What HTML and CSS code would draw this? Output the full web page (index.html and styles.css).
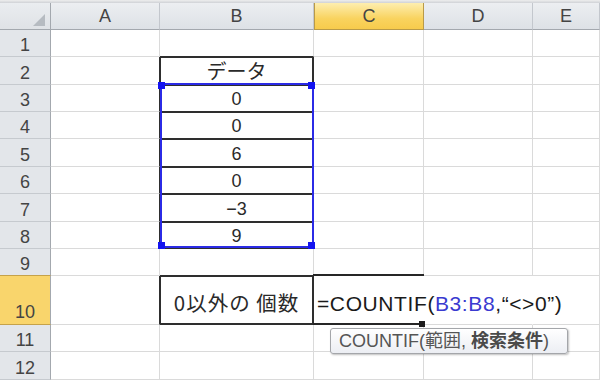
FILE: index.html
```html
<!DOCTYPE html>
<html lang="ja">
<head>
<meta charset="utf-8">
<link rel="stylesheet" href="styles.css">
</head>
<body>
<div class="wrap">
  <div class="topbar"></div>
  <div class="sheet">
    <div class="corner"><svg width="50" height="26" viewBox="0 0 50 26"><polygon points="45,11 45,23 33,23" fill="#b6bbc1"/></svg></div>
    <div class="ch">A</div><div class="ch">B</div><div class="ch sel">C</div><div class="ch">D</div><div class="ch">E</div>

    <div class="rh">1</div><div class="c"></div><div class="c bb"></div><div class="c"></div><div class="c"></div><div class="c"></div>
    <div class="rh">2</div><div class="c br"></div><div class="c tb"><span class="jp">データ</span></div><div class="c"></div><div class="c"></div><div class="c"></div>
    <div class="rh">3</div><div class="c br"></div><div class="c tb">0</div><div class="c"></div><div class="c"></div><div class="c"></div>
    <div class="rh">4</div><div class="c br"></div><div class="c tb">0</div><div class="c"></div><div class="c"></div><div class="c"></div>
    <div class="rh">5</div><div class="c br"></div><div class="c tb">6</div><div class="c"></div><div class="c"></div><div class="c"></div>
    <div class="rh">6</div><div class="c br"></div><div class="c tb">0</div><div class="c"></div><div class="c"></div><div class="c"></div>
    <div class="rh">7</div><div class="c br"></div><div class="c tb">−3</div><div class="c"></div><div class="c"></div><div class="c"></div>
    <div class="rh">8</div><div class="c br"></div><div class="c tb">9</div><div class="c"></div><div class="c"></div><div class="c"></div>
    <div class="rh">9</div><div class="c"></div><div class="c bb"></div><div class="c"></div><div class="c"></div><div class="c"></div>
    <div class="rh sel">10</div><div class="c br"></div><div class="c tb tb10"><span class="jp jp10">0以外の 個数</span></div><div class="c edit nr"><span class="f">=COUNTIF(<span class="ref">B3:B8</span>,“&lt;&gt;0”)</span></div><div class="c nr"></div><div class="c"></div>
    <div class="rh">11</div><div class="c"></div><div class="c"></div><div class="c"></div><div class="c"></div><div class="c"></div>
    <div class="rh">12</div><div class="c"></div><div class="c"></div><div class="c"></div><div class="c"></div><div class="c"></div>
  </div>

  <div class="selbox">
    <span class="hd tl"></span><span class="hd tr"></span><span class="hd bl"></span><span class="hd br2"></span>
  </div>
  <div class="editbox"><span class="fh"></span></div>
  <div class="tip">COUNTIF(範囲, <b>検索条件</b>)</div>
</div>
</body>
</html>
```

FILE: styles.css
```css
html, body {
  margin: 0;
  padding: 0;
  background: #ffffff;
  overflow: hidden;
}

.wrap {
  position: relative;
  width: 600px;
  height: 380px;
  font-family: "Liberation Sans", "Noto Sans CJK JP", sans-serif;
  color: #222;
}

.topbar {
  height: 3px;
  background: linear-gradient(#eeeeee, #cfd2d6);
}

.sheet {
  display: grid;
  grid-template-columns: 51px 109px 154px 110px 109px 67px;
  grid-template-rows: 27px 27px 28px 27px 27px 28px 27px 28px 27px 27px 49px 27px 28px;
  background: #fff;
}

.sheet > div {
  box-sizing: border-box;
}

.corner {
  background: linear-gradient(#eaedf0, #dfe2e6);
  border-right: 1px solid #a3a8ae;
  border-bottom: 1px solid #a3a8ae;
}
.corner svg { display: block; }

.ch {
  background: linear-gradient(#eceef1, #dde1e6);
  border-right: 1px solid #c3c7cd;
  border-bottom: 1px solid #a3a8ae;
  display: flex;
  align-items: center;
  justify-content: center;
  font-size: 18px;
  color: #444;
  padding-top: 1px;
}

.ch.sel {
  background: linear-gradient(#fdeeb0, #f9d35f 60%, #f7cb4c);
  border-right-color: #b99a48;
  border-left: 1px solid #b99a48;
  border-bottom-color: #b99a48;
}

.rh {
  background: #e3e6ea;
  border-right: 1px solid #a3a8ae;
  border-bottom: 1px solid #c6cacf;
  display: flex;
  align-items: flex-end;
  justify-content: center;
  font-size: 18px;
  line-height: 20px;
  color: #444;
  padding-bottom: 1px;
}

.rh.sel {
  background: #f9d56c;
  border-bottom-color: #c5a24a;
  border-top: 1px solid #c5a24a;
  margin-top: -1px;
  padding-bottom: 2px;
}

.c {
  border-right: 1px solid #dadada;
  border-bottom: 1px solid #dadada;
  display: flex;
  align-items: flex-end;
  justify-content: center;
  font-size: 18px;
  line-height: 20px;
  padding-bottom: 2px;
  min-width: 0;
  color: #2a2a2a;
}

.c.bb { border-bottom-color: #2e2e2e; }
.c.br { border-right-color: #2e2e2e; }
.c.nr { border-right-color: transparent; }

.c.tb {
  border-right-color: #2e2e2e;
  border-bottom-color: #2e2e2e;
  box-shadow: inset 1px 1px 0 #2e2e2e, inset -1px 0 0 #2e2e2e;
}

.c.tb10 {
  box-shadow: inset 1px 1px 0 #2e2e2e, inset -1px -1px 0 #2e2e2e;
  align-items: center;
  padding-bottom: 0;
  padding-top: 3px;
}

.jp {
  font-family: "Noto Sans CJK JP", sans-serif;
  font-size: 20px;
  line-height: 22px;
}

.jp10 {
  letter-spacing: 1px;
  font-size: 20.5px;
}

.c.edit {
  justify-content: flex-start;
  padding-left: 3px;
  padding-bottom: 8px;
  overflow: visible;
  white-space: nowrap;
}

.f {
  font-size: 21px;
  line-height: 24px;
  color: #1a1a1a;
  letter-spacing: 0.6px;
}

.ref { color: #3a3ad0; }

.selbox {
  position: absolute;
  left: 160px;
  top: 83px;
  width: 154px;
  height: 165px;
  box-sizing: border-box;
  border: 2px solid #2b2be6;
}

.hd {
  position: absolute;
  width: 7px;
  height: 7px;
  background: #1414f0;
}
.hd.tl { left: -4px; top: -3px; }
.hd.tr { right: -3px; top: -3px; }
.hd.bl { left: -4px; bottom: -3px; }
.hd.br2 { right: -3px; bottom: -3px; }

.editbox {
  position: absolute;
  left: 313px;
  top: 274px;
  width: 111px;
  height: 51px;
  box-sizing: border-box;
  border-top: 2px solid #262626;
  border-bottom: 2px solid #262626;
}

.fh {
  position: absolute;
  right: -1px;
  bottom: -4px;
  width: 6px;
  height: 6px;
  background: #1c1c1c;
}

.tip {
  position: absolute;
  left: 330px;
  top: 328px;
  width: 238px;
  height: 26px;
  box-sizing: border-box;
  border: 1px solid #a4a6aa;
  border-radius: 3px;
  background: linear-gradient(#ffffff, #eceef3);
  box-shadow: 1px 1px 2px rgba(0,0,0,0.25);
  font-size: 18px;
  line-height: 24px;
  color: #555;
  padding-left: 8px;
  white-space: nowrap;
}

.tip b {
  font-weight: bold;
  color: #4a4a4a;
}
```
